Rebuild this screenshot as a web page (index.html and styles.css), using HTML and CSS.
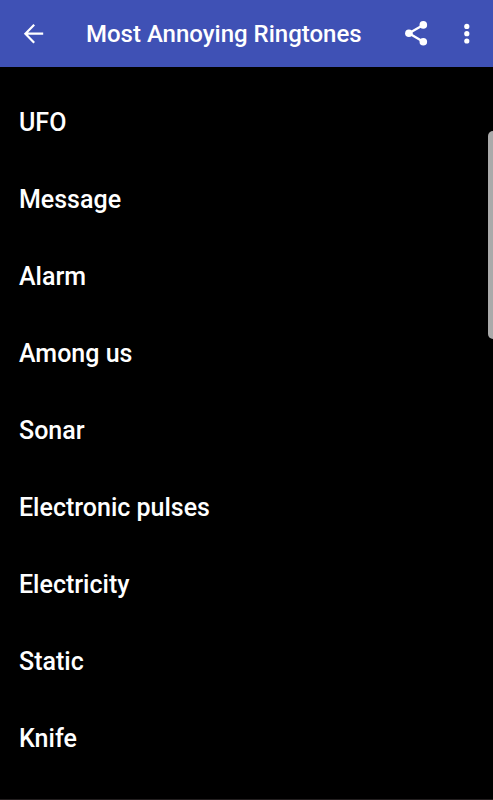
FILE: index.html
```html
<!DOCTYPE html>
<html lang="en">
<head>
  <meta charset="UTF-8" />
  <meta name="viewport" content="width=device-width, initial-scale=1.0" />
  <title>Most Annoying Ringtones</title>
  <link rel="stylesheet" href="styles.css">
</head>
<body>
  <header class="toolbar">
    <button class="icon-btn back" aria-label="Back">
      <svg viewBox="0 0 28 28"><path d="M23.2 13.7H6M14.2 4.7 5.4 13.7l8.8 9" fill="none" stroke="currentColor" stroke-width="2.2"/></svg>
    </button>
    <h1>Most Annoying Ringtones</h1>
    <button class="icon-btn share" aria-label="Share">
      <svg viewBox="0 0 28 28">
        <path d="M21.3 4.9 6.9 13.3 21.3 21.7" fill="none" stroke="currentColor" stroke-width="2.3"/>
        <circle cx="21.3" cy="4.9" r="3.8"/>
        <circle cx="6.9" cy="13.3" r="3.8"/>
        <circle cx="21.3" cy="21.7" r="3.8"/>
      </svg>
    </button>
    <button class="icon-btn more" aria-label="More options">
      <svg viewBox="0 0 28 28">
        <circle cx="13.8" cy="6.4" r="2.6"/>
        <circle cx="13.8" cy="13.7" r="2.6"/>
        <circle cx="13.8" cy="21" r="2.6"/>
      </svg>
    </button>
  </header>

  <main>
    <ul class="ringtones">
      <li><button>UFO</button></li>
      <li><button>Message</button></li>
      <li><button>Alarm</button></li>
      <li><button>Among us</button></li>
      <li><button>Sonar</button></li>
      <li><button>Electronic pulses</button></li>
      <li><button>Electricity</button></li>
      <li><button>Static</button></li>
      <li><button>Knife</button></li>
    </ul>
    <div class="scroll-thumb"></div>
  </main>
</body>
</html>
```

FILE: styles.css
```css
* {
  box-sizing: border-box;
}

body {
  margin: 0;
  min-height: 100vh;
  border-bottom: 1px solid #231f20;
  background: #000;
  color: #fff;
  font-family: Roboto, sans-serif;
}

button {
  border: none;
  background: none;
  color: inherit;
  font: inherit;
  cursor: pointer;
}

.toolbar {
  display: flex;
  align-items: center;
  height: 67px;
  padding: 0 8px 0 16px;
  background: #3f51b5;
}

.toolbar h1 {
  flex: 1;
  margin: 0 0 0 34px;
  font-size: 24px;
  font-weight: 500;
  line-height: 32px;
  white-space: nowrap;
}

.icon-btn {
  display: flex;
  flex: none;
  justify-content: center;
  width: 36px;
  padding: 4px 0;
}

.icon-btn svg {
  flex: none;
  width: 28px;
  height: 28px;
  fill: currentColor;
}

.share {
  margin-right: 15px;
}

main {
  position: relative;
  padding-top: 18px;
}

.ringtones {
  margin: 0;
  padding: 0;
  list-style: none;
}

.ringtones button {
  display: block;
  width: 100%;
  padding: 22px 19px 23px;
  font-size: 25px;
  font-weight: 500;
  line-height: 32px;
  text-align: left;
}

/* fast scroll handle */
.scroll-thumb {
  position: absolute;
  top: 64px;
  right: 0;
  width: 5px;
  height: 208px;
  border-radius: 5px 0 0 5px;
  background: #aaa;
}
```
